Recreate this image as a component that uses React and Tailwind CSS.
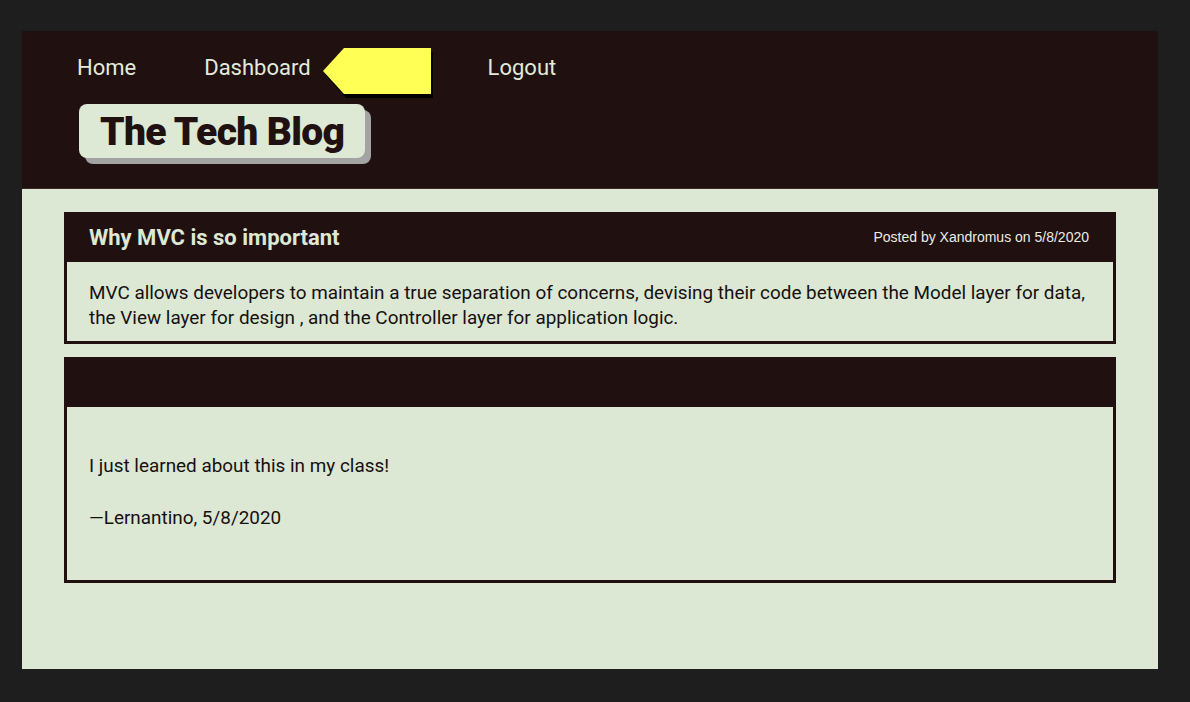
import React from "react";

const roboto = { fontFamily: "Roboto, 'Noto Sans', sans-serif" };

function Arrow() {
    return (
        <svg width="112" height="50" viewBox="0 0 112 50" className="block">
            <polygon points="2,25 23,2 110,2 110,48 23,48" fill="#000" transform="translate(2,2)" />
            <polygon points="2,23 23,0 110,0 110,46 23,46" fill="#ffff55" />
        </svg>
    );
}

function Post({ title, meta, children, bodyClass }) {
    return (
        <div className="w-[1052px] border-[3px] border-t-0 border-[#201010] bg-[#dce8d4]">
            <div className="h-[50px] bg-[#201010] flex items-center justify-between px-[22px]">
                <h2 className="text-[22px] font-bold text-[#dde8d5]" style={roboto}>{title}</h2>
                <span className="text-[14px] mr-[2px] text-[#e8ede4]" style={{ fontFamily: "'Liberation Sans', Arial, sans-serif" }}>{meta}</span>
            </div>
            <div className={"px-[22px] text-[18.9px] leading-[25px] text-[#161010] " + bodyClass} style={roboto}>
                {children}
            </div>
        </div>
    );
}

export default function App() {
    return (
        <div className="w-full h-[702px] bg-[#1e1e1e] pt-[31px] pl-[22px]">
            <div className="w-[1136px] h-[638px] flex flex-col bg-[#dce8d4]">
                <header className="h-[158px] bg-[#201010] border-b border-[#3a2a22] pl-[55px] pt-[17px]" style={roboto}>
                    <nav className="flex flex-row items-start h-[46px] text-[22px] leading-[26px] text-[#e2ebdb]">
                        <a className="mt-[7px]">Home</a>
                        <a className="mt-[7px] ml-[68px]">Dashboard</a>
                        <div className="ml-[10px]">
                            <Arrow />
                        </div>
                        <a className="mt-[7px] ml-[55px]">Logout</a>
                    </nav>
                    <div className="mt-[10px] ml-[2px] inline-flex items-center h-[54px] pt-[3px] px-[21px] rounded-lg bg-[#dde8d5] shadow-[6px_6px_0_#a3a3a3]">
                        <h1 className="text-[39px] font-black leading-none text-[#201010] tracking-[-0.65px]">The Tech Blog</h1>
                    </div>
                </header>
                <main className="flex flex-col gap-[13px] pt-[23px] pl-[42px]">
                    <Post title="Why MVC is so important" meta="Posted by Xandromus on 5/8/2020" bodyClass="pt-[18px] pb-[11px]">
                        <p>MVC allows developers to maintain a true separation of concerns, devising their code between the Model layer for data, the View layer for design , and the Controller layer for application logic.</p>
                    </Post>
                    <Post title="" meta="" bodyClass="pt-[46px] pb-[50px]">
                        <p>I just learned about this in my class!</p>
                        <p className="mt-[27px]">—Lernantino, 5/8/2020</p>
                    </Post>
                </main>
            </div>
        </div>
    );
}
